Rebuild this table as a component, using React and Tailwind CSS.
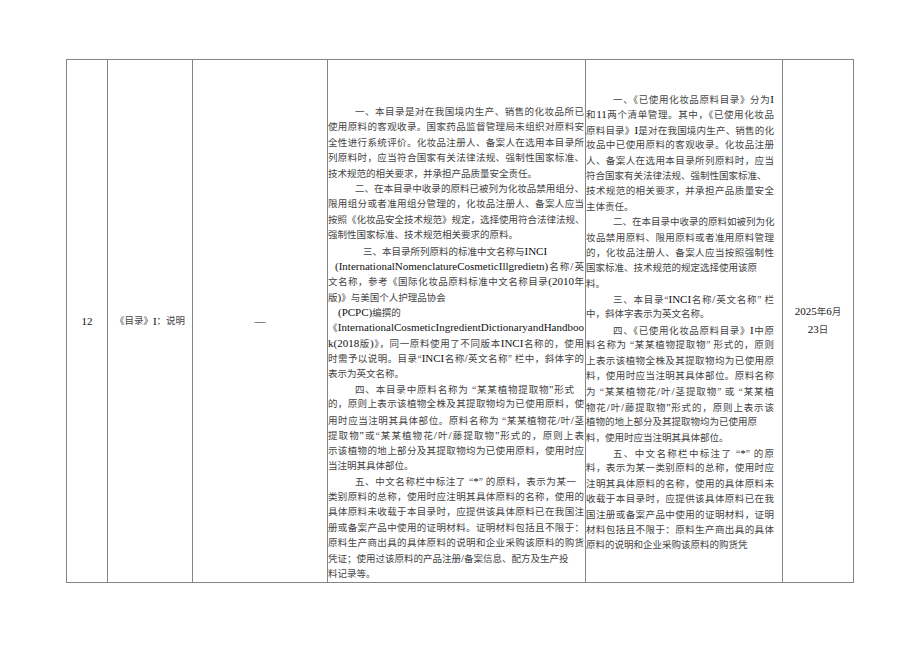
import React from 'react';

const IND = 'pl-[27px]';

// 第四列：说明原文
const col4 = [
    { t: '一、本目录是对在我国境内生产、销售的化妆品所已', i: IND, f: true },
    { t: '使用原料的客观收录。国家药品监督管理局未组织对原料安', f: true },
    { t: '全性进行系统评价。化妆品注册人、备案人在选用本目录所', f: true },
    { t: '列原料时，应当符合国家有关法律法规、强制性国家标准、', f: true },
    { t: '技术规范的相关要求，并承担产品质量安全责任。' },
    { t: '二、在本目录中收录的原料已被列为化妆品禁用组分、', i: IND, f: true },
    { t: '限用组分或者准用组分管理的，化妆品注册人、备案人应当', f: true },
    { t: '按照《化妆品安全技术规范》规定，选择使用符合法律法规、', f: true },
    { t: '强制性国家标准、技术规范相关要求的原料。' },
    { t: '三、本目录所列原料的标准中文名称与INCI', i: 'pl-[35px]' },
    { t: '(InternationalNomenclatureCosmeticIllgredietn)名称/英', i: 'pl-[7px]', f: true },
    { t: '文名称，参考《国际化妆品原料标准中文名称目录(2010年', f: true },
    { t: '版)》与美国个人护理品协会' },
    { t: '(PCPC)编撰的', i: 'pl-[10px]' },
    { t: '《InternationalCosmeticIngredientDictionaryandHandboo', f: true },
    { t: 'k(2018版)》，同一原料使用了不同版本INCI名称的，使用', f: true },
    { t: '时需予以说明。目录“INCI名称/英文名称” 栏中，斜体字的', f: true },
    { t: '表示为英文名称。' },
    { t: '四、本目录中原料名称为 “某某植物提取物\'\'形式', i: IND + ' pr-[10px]', f: true },
    { t: '的，原则上表示该植物全株及其提取物均为已使用原料，使', f: true },
    { t: '用时应当注明其具体部位。原料名称为 “某某植物花/叶/茎', f: true },
    { t: '提取物\'\'或“某某植物花/叶/藤提取物\'\'形式的，原则上表', f: true },
    { t: '示该植物的地上部分及其提取物均为已使用原料，使用时应', f: true },
    { t: '当注明其具体部位。' },
    { t: '五、中文名称栏中标注了 “*” 的原料，表示为某一', i: IND + ' pr-[8px]', f: true },
    { t: '类别原料的总称，使用时应注明其具体原料的名称，使用的', f: true },
    { t: '具体原料未收载于本目录时，应提供该具体原料已在我国注', f: true },
    { t: '册或备案产品中使用的证明材料。证明材料包括且不限于：', f: true },
    { t: '原料生产商出具的具体原料的说明和企业采购该原料的购货', f: true },
    { t: '凭证；使用过该原料的产品注册/备案信息、配方及生产投' },
    { t: '料记录等。' },
];

// 第五列：修改后
const col5 = [
    { t: '一、《已使用化妆品原料目录》分为I', i: IND, f: true },
    { t: '和11两个清单管理。其中，《已使用化妆品', f: true },
    { t: '原料目录》I是对在我国境内生产、销售的化', f: true },
    { t: '妆品中已使用原料的客观收录。化妆品注册', f: true },
    { t: '人、备案人在选用本目录所列原料时，应当', f: true },
    { t: '符合国家有关法律法规、强制性国家标准、' },
    { t: '技术规范的相关要求，并承担产品质量安全', f: true },
    { t: '主体责任。' },
    { t: '二、在本目录中收录的原料如被列为化', i: IND, f: true },
    { t: '妆品禁用原料、限用原料或者准用原料管理', f: true },
    { t: '的，化妆品注册人、备案人应当按照强制性', f: true },
    { t: '国家标准、技术规范的规定选择使用该原' },
    { t: '料。' },
    { t: '三、本目录“INCI名称/英文名称” 栏', i: IND, f: true },
    { t: '中，斜体字表示为英文名称。' },
    { t: '四、《已使用化妆品原料目录》I中原', i: IND, f: true },
    { t: '料名称为 “某某植物提取物” 形式的，原则', f: true },
    { t: '上表示该植物全株及其提取物均为已使用原', f: true },
    { t: '料，使用时应当注明其具体部位。原料名称', f: true },
    { t: '为 “某某植物花/叶/茎提取物” 或 “某某植', f: true },
    { t: '物花/叶/藤提取物\'\'形式的，原则上表示该', f: true },
    { t: '植物的地上部分及其提取物均为已使用原' },
    { t: '料，使用时应当注明其具体部位。' },
    { t: '五、中文名称栏中标注了 “*” 的原', i: IND, f: true },
    { t: '料，表示为某一类别原料的总称，使用时应', f: true },
    { t: '注明其具体原料的名称，使用的具体原料未', f: true },
    { t: '收载于本目录时，应提供该具体原料已在我', f: true },
    { t: '国注册或备案产品中使用的证明材料，证明', f: true },
    { t: '材料包括且不限于：原料生产商出具的具体', f: true },
    { t: '原料的说明和企业采购该原料的购货凭' },
];

// 西文、数字用稍大的衬线字号
const Rich = ({ text }) =>
    text.split(/([\x21-\x7E]+)/).map((p, k) =>
        /^[\x21-\x7E]+$/.test(p)
            ? <span key={k} className="text-[11px] text-[#111]">{p}</span>
            : <span key={k}>{p}</span>
    );

const Line = ({ line }) => (
    <div
        className={
            'whitespace-nowrap h-[15.4px] leading-[15.4px] ' +
            (line.f ? 'text-justify [text-align-last:justify] ' : '') +
            (line.i || '')
        }
    >
        <Rich text={line.t} />
    </div>
);

const App = () => {
    return (
        <div className="w-[920px] h-[651px] bg-white pt-[59px] pl-[66px] font-['Liberation_Serif','Noto_Sans_CJK_SC',serif] text-[9.5px] text-[#444]">
            <div className="w-[788px] h-[524px] border border-[#858585] flex">
                {/* 序号 */}
                <div className="w-[41px] border-r border-[#858585] flex items-center justify-center">
                    <span className="text-[11px] text-[#111]">12</span>
                </div>

                {/* 目录 */}
                <div className="w-[85px] border-r border-[#858585] flex items-center justify-center">
                    <Rich text="《目录》I：说明" />
                </div>

                {/* 原 */}
                <div className="w-[135px] border-r border-[#858585] flex items-center justify-center">
                    <span className="text-[11px] text-[#222]">—</span>
                </div>

                {/* 说明 */}
                <div className="w-[258px] border-r border-[#858585] pt-[45px] pl-0 pr-[1px]">
                    {col4.map((l, k) => <Line key={k} line={l} />)}
                </div>

                {/* 修改后 */}
                <div className="w-[197px] border-r border-[#858585] pt-[32px] pl-0 pr-[8px]">
                    {col5.map((l, k) => <Line key={k} line={l} />)}
                </div>

                {/* 日期 */}
                <div className="w-[70px] flex flex-col items-center justify-center leading-[17px]">
                    <div><Rich text="2025年6月" /></div>
                    <div><Rich text="23日" /></div>
                </div>
            </div>
        </div>
    );
};

export default App;
